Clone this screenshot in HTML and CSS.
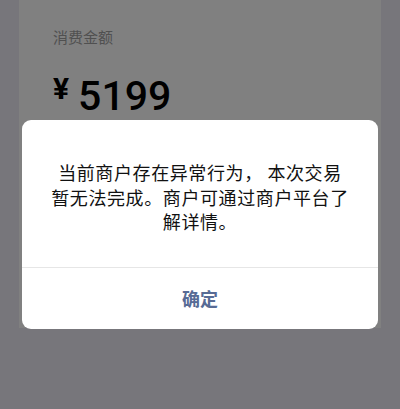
FILE: index.html
```html
<!DOCTYPE html>
<html lang="zh-CN">
<head>
<meta charset="utf-8">
<title>消费金额</title>
<link rel="stylesheet" href="styles.css">
</head>
<body>
<div class="page">
  <div class="card">
    <div class="label">消费金额</div>
    <div class="amount">
      <span class="currency">¥</span>
      <span class="value">5199</span>
    </div>
  </div>
  <div class="dialog">
    <div class="dialog-body">当前商户存在异常行为， 本次交易<br>暂无法完成。商户可通过商户平台了<br>解详情。</div>
    <div class="dialog-footer">
      <div class="dialog-btn">确定</div>
    </div>
  </div>
</div>
</body>
</html>
```

FILE: styles.css
```css
html, body {
  margin: 0;
  padding: 0;
  background: #77767b;
}
body {
  font-family: "Noto Sans CJK SC", "Noto Sans", sans-serif;
}
.page {
  position: relative;
  width: 400px;
  height: 409px;
  overflow: hidden;
}
.card {
  margin: 0 19px;
  height: 328px;
  background: #808080;
  padding: 27px 0 0 34px;
  box-sizing: border-box;
}
.label {
  font-size: 15px;
  line-height: 20px;
  color: #505050;
}
.amount {
  display: flex;
  align-items: flex-start;
  margin-top: 29px;
  color: #000;
}
.currency {
  font-family: Roboto, "Noto Sans", sans-serif;
  font-size: 30px;
  line-height: 30px;
  font-weight: 700;
  margin-top: -2px;
  margin-right: 9px;
}
.value {
  font-family: Roboto, "Noto Sans", sans-serif;
  font-size: 41px;
  line-height: 40px;
  font-weight: 500;
}
.dialog {
  position: absolute;
  left: 22px;
  top: 120px;
  width: 356px;
  background: #ffffff;
  border-radius: 9px;
  overflow: hidden;
}
.dialog-body {
  padding: 40px 20px 33px;
  font-size: 18px;
  line-height: 24.5px;
  letter-spacing: 0.6px;
  text-align: center;
  color: #111111;
}
.dialog-footer {
  border-top: 1px solid #e6e6e6;
}
.dialog-btn {
  height: 61px;
  line-height: 61px;
  text-align: center;
  font-size: 18px;
  font-weight: 700;
  color: #576b95;
}
```
